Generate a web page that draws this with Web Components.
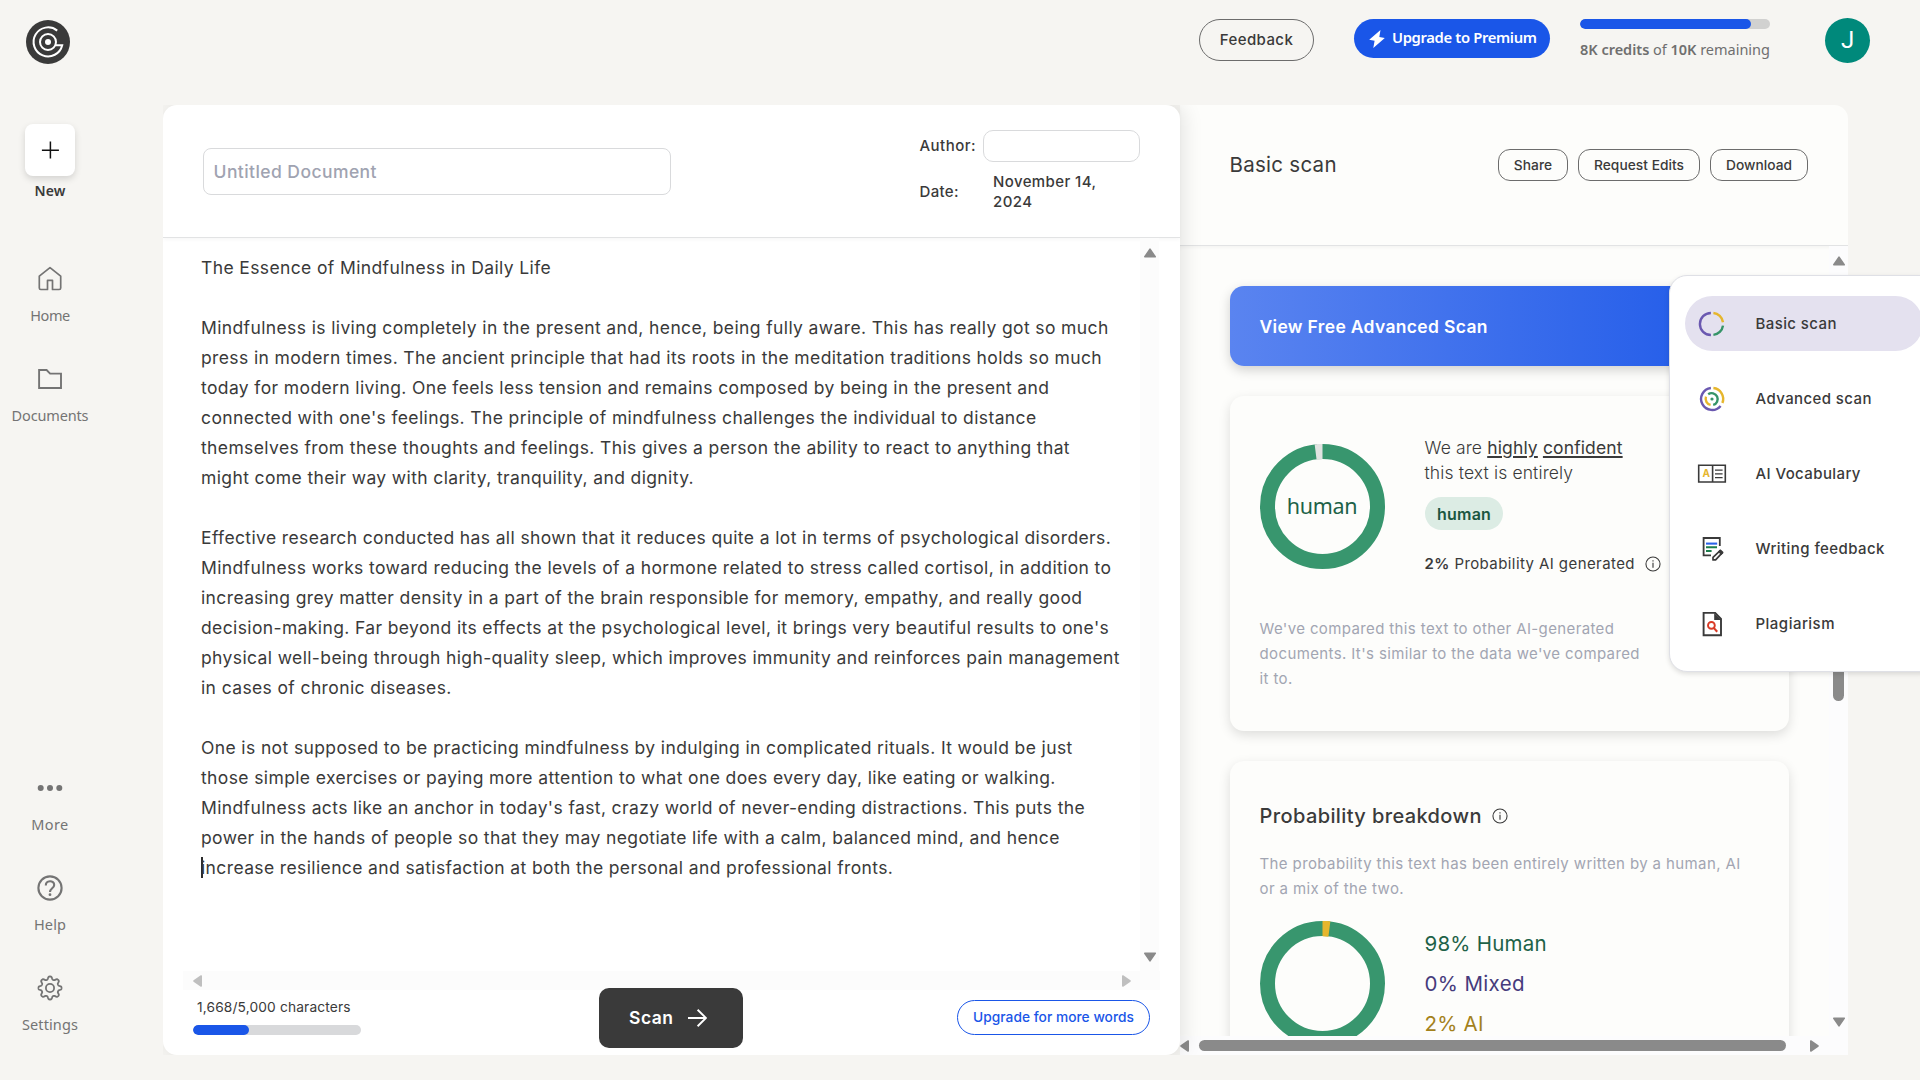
<!DOCTYPE html>
<html lang="en">
<head>
<meta charset="utf-8">
<title>Untitled Document</title>
<style>
html,body{margin:0;height:100%;overflow:hidden;background:#f6f5f2}
body{font-family:Inter,"Liberation Sans",sans-serif;color:#3a3a3a}
</style>
</head>
<body>
<scan-app></scan-app>
<script>
const define=(name,html,setup)=>{
  const tpl=document.createElement('template');
  tpl.innerHTML='<style>*{box-sizing:border-box}</style>'+html;
  customElements.define(name,class extends HTMLElement{
    connectedCallback(){
      if(this.shadowRoot)return;
      const root=this.attachShadow({mode:'open'});
      root.append(document.importNode(tpl.content,true));
      if(setup)setup(this,root);
    }
  });
};

/* Tracks its text out so that the longest line is w pixels wide. */
define('fit-text','<style>:host{display:block;white-space:nowrap}</style><slot></slot>',el=>{
  const r=document.createRange();
  r.selectNodeContents(el);
  const n=+el.getAttribute('n')||el.textContent.trim().length;
  const natural=r.getBoundingClientRect().width;
  el.style.letterSpacing=((+el.getAttribute('w')-natural)/(n-1)).toFixed(3)+'px';
});

const gear=(()=>{
  let d='';
  for(let i=0;i<=192;i++){
    const a=i/192*Math.PI*2, r=10.1+1.5*Math.tanh(1.7*Math.cos(8*a));
    d+=(i?'L':'M')+(12+r*Math.sin(a)).toFixed(2)+' '+(12-r*Math.cos(a)).toFixed(2);
  }
  return d+'Z';
})();
const S='fill="none" stroke="#747474"';
const ICONS={
  home:`<path ${S} stroke-width="1.7" stroke-linejoin="round" d="M12 .7 22.7 9.2V21a1.5 1.5 0 0 1-1.5 1.5H14.5V13.4H9.5V22.5H2.8a1.5 1.5 0 0 1-1.5-1.5V9.2Z"/>`,
  folder:`<path ${S} stroke-width="1.9" d="M1.1 3H8.6L12.1 6.6H23V21H1.1Z"/>`,
  more:`<g fill="#747474"><circle cx="2.7" cy="12" r="3"/><circle cx="12" cy="12" r="3"/><circle cx="21.3" cy="12" r="3"/></g>`,
  help:`<circle cx="12" cy="12" r="11.6" ${S} stroke-width="2.1"/><path ${S} stroke-width="2.1" d="M7.8 9.6C7.8 3.9 16.2 4 16.2 9c0 3.2-4.2 3.4-4.2 7"/><circle cx="12" cy="18.7" r="1.4" fill="#747474"/>`,
  gear:`<path ${S} stroke-width="1.8" stroke-linejoin="round" d="${gear}"/><circle cx="12" cy="12" r="4.1" ${S} stroke-width="1.8"/>`,
  basic:`<g fill="none" stroke-width="2.4"><path stroke="#6a58b0" d="M10.9 1A11 11 0 0 0 10.9 23"/><path stroke="#e6b62d" d="M13.4 1A11 11 0 0 1 23 10.2"/><path stroke="#369468" d="M23 13.6A11 11 0 0 1 13.4 22.9"/></g>`,
  advanced:`<g fill="none" stroke-width="2.4"><path stroke="#6a58b0" d="M10.9 1A11 11 0 1 0 20.6 18.9"/><path stroke="#e6b62d" d="M13.4 1A11 11 0 0 1 22.4 16"/><path stroke="#369468" d="M8.2 7.2A6 6 0 1 1 13.2 17.9"/><path stroke="#e6b62d" d="M6 9.6A6.3 6.3 0 0 0 10.6 17.9"/></g><circle cx="12" cy="12" r="1.6" fill="#369468"/>`,
  vocab:`<g fill="none" stroke="#3a3a3a" stroke-width="1.6"><path d="M-1.3 3.2H25.3V20H-1.3ZM12.6 3.2V20" /><path d="M15 8.2H22.6M15 11.9H22.6M15 15.6H22.6" stroke-width="1.3"/></g><text x="2.4" y="15.4" font-family="Inter" font-weight="700" font-size="10" fill="#e6b62d">A</text>`,
  writing:`<path fill="none" stroke="#3a3a3a" stroke-width="1.8" d="M11 18.3H3.6V1H19.8V9"/><path stroke="#2a62e8" stroke-width="2.1" d="M6 6.6H17.2"/><path stroke="#1b7d4b" stroke-width="2.1" d="M6 10.3H17M6 14H11.6"/><path fill="none" stroke="#3a3a3a" stroke-width="1.7" stroke-linejoin="round" d="M13 22.9V20.4L20.4 13.4 22.6 15.4 15.6 22.9Z"/><path stroke="#3a3a3a" stroke-width="3" d="M19 13.6 22.3 17"/>`,
  plagiarism:`<path fill="none" stroke="#3a3a3a" stroke-width="1.9" d="M3.6 .9H15.2L21 7V23.2H3.6Z"/><path fill="#3a3a3a" d="M14.2 1V8H21Z"/><circle cx="11.4" cy="13.4" r="3.4" fill="none" stroke="#d93a26" stroke-width="1.9"/><path stroke="#d93a26" stroke-width="2.1" d="M13.5 15.6 17.2 19.8"/>`,
  info:`<circle cx="12" cy="12" r="10.6" fill="none" stroke="#3a3a3a" stroke-width="1.6"/><path stroke="#3a3a3a" stroke-width="1.7" d="M12 10.2V17.5M12 6.3V8.3"/>`
};
define('app-icon','<style>:host{display:block;width:24px;height:24px;flex:none}svg{display:block;width:100%;height:100%;overflow:visible}</style><svg viewBox="0 0 24 24"></svg>',(el,root)=>{
  root.querySelector('svg').innerHTML=ICONS[el.getAttribute('name')];
});

define('nav-entry',`<style>
:host{display:flex;flex-direction:column;align-items:center;gap:14px;width:100px;height:58px;font:400 14.5px/20px "Noto Sans",sans-serif;color:#747474}
</style><slot name="icon"></slot><slot></slot>`);

define('side-nav',`<style>
:host{display:flex;flex-direction:column;width:163px;height:950px;padding:19px 0 21px}
.new{width:100px;display:flex;flex-direction:column;align-items:center;gap:5px;font:600 14px/20px "Noto Sans",sans-serif;margin-bottom:66px}
.box{width:50px;height:52px;border-radius:8px;background:#fff;box-shadow:0 3px 7px rgba(0,0,0,.14);display:grid;place-items:center}
.box svg{display:block}
.g{display:flex;flex-direction:column;gap:42px}
.b{margin-top:auto}
</style>
<div class="new"><div class="box"><svg width="18" height="18" viewBox="0 0 18 18"><path d="M9.4 .5V17.4M.9 9.2H17.9" stroke="#111" stroke-width="1.5"/></svg></div><fit-text w="31">New</fit-text></div>
<div class="g">
<nav-entry><app-icon slot="icon" name="home"></app-icon><fit-text w="40">Home</fit-text></nav-entry>
<nav-entry><app-icon slot="icon" name="folder"></app-icon><fit-text w="77">Documents</fit-text></nav-entry>
</div>
<div class="g b">
<nav-entry><app-icon slot="icon" name="more"></app-icon><fit-text w="37">More</fit-text></nav-entry>
<nav-entry><app-icon slot="icon" name="help"></app-icon><fit-text w="32">Help</fit-text></nav-entry>
<nav-entry><app-icon slot="icon" name="gear"></app-icon><fit-text w="56">Settings</fit-text></nav-entry>
</div>`);

define('pill-button',`<style>
:host{display:flex;align-items:center;justify-content:center;border:1px solid #6c6c6c;border-radius:12px;height:32px;flex:none;font-size:13.75px;font-weight:500;white-space:nowrap}
</style><slot></slot>`);

define('progress-bar',`<style>
:host{display:block;height:10px;border-radius:5px;background:#d1d1d0;overflow:hidden}
div{height:10px;border-radius:5px;background:#1a56e8}
</style><div></div>`,(el,root)=>{root.querySelector('div').style.width=el.getAttribute('fill')+'px'});

define('top-bar',`<style>
:host{display:flex;align-items:flex-start;height:105px;padding:18px 50px 0 26px}
.logo{margin-top:2px;display:block}
.sp{flex:1}
.fb{width:115px;height:42px;border-radius:21px;font-size:15px;font-weight:500;margin:1px 40px 0 0}
.fb fit-text{margin-top:-1px}
.up{margin-top:1px;width:196px;height:39px;border-radius:20px;background:#1a56e8;color:#fff;display:flex;align-items:center;padding-left:15px;gap:7px;font:600 14.8px/20px "Noto Sans",sans-serif}
.up fit-text{margin-top:-3px}
.cr{margin:1px 55px 0 30px;width:190px;font:400 14.5px/20px "Noto Sans",sans-serif;color:#6f6f6f}
.cr fit-text{margin-top:10px}
.cr b{font-weight:600}
.av{width:45px;height:45px;border-radius:50%;background:#00897b;color:#fff;display:grid;place-items:center;font:400 24px/45px Roboto,sans-serif}
</style>
<svg class="logo" width="44" height="44" viewBox="0 0 44 44"><circle cx="22" cy="22" r="22" fill="#3a3a3a"/><g fill="none" stroke="#fff" stroke-width="2"><path d="M31.2 10.6A14.5 14.5 0 1 0 36.2 25.2H28.8"/><circle cx="22" cy="22" r="8"/></g><circle cx="22" cy="22" r="3" fill="#fff"/></svg>
<div class="sp"></div>
<pill-button class="fb"><fit-text w="73">Feedback</fit-text></pill-button>
<div class="up"><svg width="16" height="18" viewBox="0 0 16 18"><path fill="#fff" d="M11.5 0 .2 9.8 5.6 10.7 4.3 18 15.8 7.9 10.3 7.1Z"/></svg><fit-text w="145">Upgrade to Premium</fit-text></div>
<div class="cr"><progress-bar fill="171"></progress-bar><fit-text w="190"><b>8K credits</b> of <b>10K</b> remaining</fit-text></div>
<div class="av">J</div>`);

/* Arrow head of a scrollbar, pointing to dir. */
define('scroll-arrow',`<style>
:host{display:block;width:12px;height:10px;color:#8a8a8a}
:host([dir=left]),:host([dir=right]){width:9px;height:12px}
:host([dim]){color:#bfbfbf}
svg{display:block;fill:currentColor;stroke:currentColor;stroke-width:1.6;stroke-linejoin:round}
</style><svg width="12" height="12"><path/></svg>`,(el,root)=>{
  root.querySelector('path').setAttribute('d',{up:'M6 1.2 11.2 8.8H.8Z',down:'M6 8.8 11.2 1.2H.8Z',left:'M1 6 8.2 1V11Z',right:'M8 6 .8 1V11Z'}[el.getAttribute('dir')]);
});

define('doc-editor',`<style>
:host{display:flex;flex-direction:column;width:1017px;height:950px;flex:none;background:#fff;border-radius:14px;box-shadow:4px 0 20px rgba(0,0,0,.1);position:relative;z-index:1}
header{height:133px;flex:none;border-bottom:1px solid #e2e3e4;box-shadow:0 2px 4px rgba(0,0,0,.03);display:flex;align-items:flex-start;padding:25px 40px 0;justify-content:space-between}
.title{margin-top:18px;width:468px;height:47px;border:1px solid #d9dadc;border-radius:8px;display:flex;align-items:center;padding-left:9.5px;font-size:17.5px;font-weight:500;color:#a0a3b1}
.meta{display:grid;grid-template-columns:63px 157px;grid-template-rows:32px 40px;row-gap:10px;align-items:center;font-size:15px;line-height:20px;font-weight:500}
.meta>fit-text:not(.val){margin-left:-.5px}
.meta i{display:block;height:32px;border:1px solid #d9dadc;border-radius:10px}
.val{padding-left:10px}
.area{display:flex;height:733px;justify-content:space-between;padding:0 21px 0 38px}
.txt{padding-top:15px;font-size:17.5px;line-height:30px}
.caret{display:inline-block;width:2px;height:21px;margin-right:-2px;background:#2b2b2b;vertical-align:-4px}
.v{width:19px;background:#fcfcfc;display:flex;flex-direction:column;align-items:center;justify-content:space-between;padding:10px 0 9px}
.h{margin:0 20px;height:19px;background:#fcfcfc;display:flex;align-items:center;justify-content:space-between;padding:0 29px 0 10px;flex:none}
footer{height:65px;display:flex;align-items:flex-start;justify-content:space-between;padding:0 30px}
.count{width:168px;padding-top:8px;font-size:13.75px;line-height:18px}
.count fit-text{margin:0 0 9px 4px}
progress-bar{background:#d8d9db}
.scan{margin:-2px 0 0 24px;width:144px;height:60px;border-radius:10px;background:#3a3a3a;color:#fff;display:flex;align-items:center;padding-left:30px;gap:15px;font-size:17.5px;font-weight:600;position:relative}
.scan fit-text{margin-top:-1px}
.more{width:193px;height:35px;border-radius:18px;border-color:#1a56e8;color:#1a56e8;margin-top:10px}
.more fit-text{margin-top:-1px}
</style>
<header>
<div class="title"><fit-text w="163">Untitled Document</fit-text></div>
<div class="meta"><fit-text w="56">Author:</fit-text><i></i><fit-text w="39">Date:</fit-text><fit-text class="val" w="103" n="12">November 14,<br>2024</fit-text></div>
</header>
<div class="area"><fit-text class="txt" w="918.5" n="102">The Essence of Mindfulness in Daily Life<br><br>Mindfulness is living completely in the present and, hence, being fully aware. This has really got so much<br>press in modern times. The ancient principle that had its roots in the meditation traditions holds so much<br>today for modern living. One feels less tension and remains composed by being in the present and<br>connected with one's feelings. The principle of mindfulness challenges the individual to distance<br>themselves from these thoughts and feelings. This gives a person the ability to react to anything that<br>might come their way with clarity, tranquility, and dignity.<br><br>Effective research conducted has all shown that it reduces quite a lot in terms of psychological disorders.<br>Mindfulness works toward reducing the levels of a hormone related to stress called cortisol, in addition to<br>increasing grey matter density in a part of the brain responsible for memory, empathy, and really good<br>decision-making. Far beyond its effects at the psychological level, it brings very beautiful results to one's<br>physical well-being through high-quality sleep, which improves immunity and reinforces pain management<br>in cases of chronic diseases.<br><br>One is not supposed to be practicing mindfulness by indulging in complicated rituals. It would be just<br>those simple exercises or paying more attention to what one does every day, like eating or walking.<br>Mindfulness acts like an anchor in today's fast, crazy world of never-ending distractions. This puts the<br>power in the hands of people so that they may negotiate life with a calm, balanced mind, and hence<br><span class="caret"></span>increase resilience and satisfaction at both the personal and professional fronts.</fit-text>
<div class="v"><scroll-arrow dir="up"></scroll-arrow><scroll-arrow dir="down"></scroll-arrow></div></div>
<div class="h"><scroll-arrow dim dir="left"></scroll-arrow><scroll-arrow dim dir="right"></scroll-arrow></div>
<footer>
<div class="count"><fit-text w="153.5">1,668/5,000 characters</fit-text><progress-bar fill="56"></progress-bar></div>
<div class="scan"><fit-text w="44">Scan</fit-text><svg width="19" height="18" viewBox="0 0 19 18"><path fill="none" stroke="#fff" stroke-width="1.9" d="M0 9H18M9.6 .8 18 9 9.6 17.2"/></svg></div>
<pill-button class="more"><fit-text w="161">Upgrade for more words</fit-text></pill-button>
</footer>`);

define('donut-chart',`<style>
:host{display:grid;width:125px;height:125px;flex:none;place-items:center}
svg,div{grid-area:1/1}
svg{display:block}
</style><svg width="125" height="125" viewBox="0 0 125 125"><circle cx="62.5" cy="62.5" r="55" fill="none" stroke="#38966e" stroke-width="15"/><path/></svg><div><slot></slot></div>`,(el,root)=>{
  const a=+el.getAttribute('from')*Math.PI/180,b=+el.getAttribute('to')*Math.PI/180;
  const p=(r,t)=>(62.5+r*Math.sin(t)).toFixed(2)+' '+(62.5-r*Math.cos(t)).toFixed(2);
  const s=root.querySelector('path');
  s.setAttribute('d',`M${p(62.7,a)}A62.7 62.7 0 0 1 ${p(62.7,b)}L${p(47.2,b)}A47.2 47.2 0 0 0 ${p(47.2,a)}Z`);
  s.setAttribute('fill',el.getAttribute('color'));
});

define('result-card',`<style>
:host{display:block;width:559px;border-radius:14px;background:#fdfdfb;box-shadow:0 4px 12px rgba(0,0,0,.13);flex:none}
</style><slot></slot>`);

define('scan-results',`<style>
:host{display:flex;flex-direction:column;width:668px;height:950px;background:#fdfdfb;border-radius:0 14px 0 0;overflow:hidden;flex:none}
header{height:141px;flex:none;border-bottom:1px solid #e2e3e4;display:flex;align-items:flex-start;padding:44px 40px 0 49.5px;gap:10px}
header>fit-text{font-size:20.5px;line-height:32px;margin-right:auto}
.mid{height:790px;display:flex;overflow:hidden;box-shadow:inset 0 3px 4px -2px rgba(0,0,0,.05)}
.list{width:649px;padding:40px 0 0 50px;display:flex;flex-direction:column;gap:30px}
.ban{height:80px;flex:none;width:559px;border-radius:14px;background:linear-gradient(90deg,#5a84f0,#1a56e8);box-shadow:0 4px 12px rgba(0,0,0,.18);color:#fff;font-size:17.5px;font-weight:600;line-height:80px;padding:1px 0 0 29.5px}
.c1{height:335px;padding:39px 30px 0}
.c2{height:420px;padding:43px 30px 0}
.row{display:flex;gap:39.5px}
.c1 donut-chart{margin-top:8.5px;font:400 21.5px/25px "Noto Sans",sans-serif;color:#1d6248}
.c1 donut-chart fit-text{margin-top:-2px;margin-left:-1px}
.conf{font-size:17.5px;line-height:25px;font-weight:300}
.conf u{font-weight:400;text-underline-offset:2px;text-decoration-thickness:1.5px}
.tag{width:78px;height:33px;border-radius:17px;background:#dcece4;color:#1b5641;font-size:16px;font-weight:600;display:grid;place-items:center;margin:12px 0 24px .5px}
.prob{display:flex;gap:10px;align-items:center;font-size:15px;line-height:20px;margin:0}
.prob b{font-weight:600}
.prob app-icon,.h app-icon{width:16px;height:16px}
.d{font-size:15px;line-height:25px;color:#a2a5b2}
.c1 .d{margin:42px 0 0 -.5px}
.h{display:flex;gap:10px;align-items:center;font-size:20px;line-height:24px;font-weight:500;margin-left:-.5px}
.c2 .d{margin:23px 0 20px -.5px}
.leg{font-size:20.5px;line-height:40px;padding-top:3px}
.v{width:19px;background:#fcfcfd;display:flex;flex-direction:column;align-items:center;padding:10px 0 9px}
.v i{width:11px;border-radius:6px;background:#8a8a8a;height:160px;margin-top:275px}
.v scroll-arrow:last-child{margin-top:auto}
.hb{height:19px;background:#fcfcfd;display:flex;align-items:center}
.hb i{width:587px;height:11px;border-radius:6px;background:#8a8a8a;margin:0 24px 0 10px}
</style>
<header><fit-text w="107">Basic scan</fit-text>
<pill-button style="width:70px"><fit-text w="38.5">Share</fit-text></pill-button>
<pill-button style="width:122px"><fit-text w="90">Request Edits</fit-text></pill-button>
<pill-button style="width:98px"><fit-text w="66">Download</fit-text></pill-button></header>
<div class="mid"><div class="list">
<div class="ban"><fit-text w="228">View Free Advanced Scan</fit-text></div>
<result-card class="c1"><div class="row"><donut-chart from="-7.2" to="0" color="#e1e3e1"><fit-text w="71">human</fit-text></donut-chart>
<div><fit-text class="conf" w="198" n="23">We are <u>highly</u> <u>confident</u><br>this text is entirely</fit-text>
<div class="tag"><fit-text w="54">human</fit-text></div>
<div class="prob"><fit-text w="210"><b>2%</b> Probability AI generated</fit-text><app-icon name="info"></app-icon></div></div></div>
<fit-text class="d" w="380" n="50">We've compared this text to other AI-generated<br>documents. It's similar to the data we've compared<br>it to.</fit-text>
</result-card>
<result-card class="c2"><div class="h"><fit-text w="222">Probability breakdown</fit-text><app-icon name="info"></app-icon></div>
<fit-text class="d" w="480" n="64">The probability this text has been entirely written by a human, AI<br>or a mix of the two.</fit-text>
<div class="row"><donut-chart from="0" to="7.2" color="#e6b62d"></donut-chart>
<div class="leg"><fit-text w="122" style="color:#1d6248">98% Human</fit-text><fit-text w="100" style="color:#463b7c">0% Mixed</fit-text><fit-text w="59" style="color:#a3811b">2% AI</fit-text></div></div>
</result-card>
</div><div class="v"><scroll-arrow dir="up"></scroll-arrow><i></i><scroll-arrow dir="down"></scroll-arrow></div></div>
<div class="hb"><scroll-arrow dir="left"></scroll-arrow><i></i><scroll-arrow dir="right"></scroll-arrow></div>`);

define('menu-entry',`<style>
:host{display:flex;align-items:center;height:55px;width:238px;padding-left:15px;gap:31.5px;border-radius:28px;font-size:15px;font-weight:500;flex:none}
:host([selected]){background:#e4e1ef}
</style><slot name="icon"></slot><slot></slot>`);

define('scan-menu',`<style>
:host{position:absolute;left:1669px;top:275px;width:270px;height:397px;border:1px solid #dfe0e6;border-radius:18px;background:#fff;box-shadow:0 2px 5px rgba(0,0,0,.12);padding:20px 15px;display:flex;flex-direction:column;gap:20px;z-index:3}
</style>
<menu-entry selected><app-icon slot="icon" name="basic"></app-icon><fit-text w="81">Basic scan</fit-text></menu-entry>
<menu-entry><app-icon slot="icon" name="advanced"></app-icon><fit-text w="116">Advanced scan</fit-text></menu-entry>
<menu-entry><app-icon slot="icon" name="vocab"></app-icon><fit-text w="105">AI Vocabulary</fit-text></menu-entry>
<menu-entry><app-icon slot="icon" name="writing"></app-icon><fit-text w="129">Writing feedback</fit-text></menu-entry>
<menu-entry><app-icon slot="icon" name="plagiarism"></app-icon><fit-text w="79">Plagiarism</fit-text></menu-entry>`);

define('scan-app',`<style>
:host{display:block;width:1920px;height:1080px;overflow:hidden;position:relative;background:#f6f5f2}
.row{display:flex}
main{display:flex;width:1685px;height:950px;overflow:hidden}
</style>
<top-bar></top-bar>
<div class="row"><side-nav></side-nav><main><doc-editor></doc-editor><scan-results></scan-results></main></div>
<scan-menu></scan-menu>`);
</script>
</body>
</html>
